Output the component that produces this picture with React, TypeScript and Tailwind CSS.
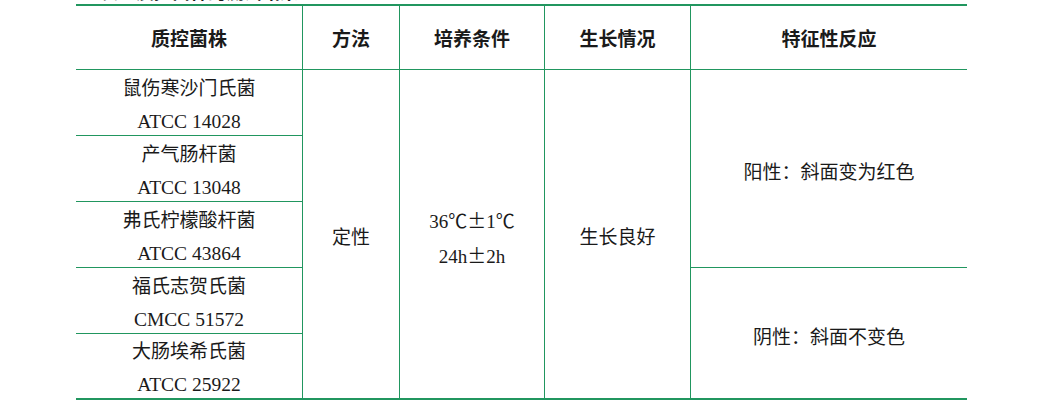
import React from "react";

const strains = [
  { name: "鼠伤寒沙门氏菌", code: "ATCC 14028", cls: "row-start-2 border-b" },
  { name: "产气肠杆菌", code: "ATCC 13048", cls: "row-start-3 border-b" },
  { name: "弗氏柠檬酸杆菌", code: "ATCC 43864", cls: "row-start-4 border-b" },
  { name: "福氏志贺氏菌", code: "CMCC 51572", cls: "row-start-5 border-b" },
  { name: "大肠埃希氏菌", code: "ATCC 25922", cls: "row-start-6" },
];

const headers = [
  { t: "质控菌株", cls: "col-start-1 border-r" },
  { t: "方法", cls: "col-start-2 border-r" },
  { t: "培养条件", cls: "col-start-3 border-r" },
  { t: "生长情况", cls: "col-start-4 border-r" },
  { t: "特征性反应", cls: "col-start-5" },
];

const Pm = () => <span className="font-['Noto_Sans_CJK_SC',sans-serif]">±</span>;

export default function App() {
  return (
    <div className="w-[1038px] h-[407px] bg-white overflow-hidden text-[#1a1a1a] font-['Liberation_Serif','Noto_Sans_CJK_SC',serif]">
      <div className="h-[4px] overflow-hidden pl-[100px]">
        <div className="-mt-[17px] text-[18px] leading-[20px] font-bold whitespace-nowrap">表 2 质控菌株的测试结果</div>
      </div>
      <div className="ml-[76px] w-[891px] border-t-2 border-b-2 border-[#21965f]">
        <div className="grid grid-cols-[227px_97px_145px_146px_276px] grid-rows-[64px_66px_66px_66px_66px_64px] text-[19px]">
          {headers.map((h) => (
            <div
              key={h.t}
              className={`row-start-1 flex items-center justify-center pt-[6px] font-bold border-b border-[#21965f] ${h.cls}`}
            >
              {h.t}
            </div>
          ))}
          {strains.map((s) => (
            <div
              key={s.code}
              className={`col-start-1 flex flex-col items-center justify-center pt-[4px] leading-[33px] border-r border-[#21965f] ${s.cls}`}
            >
              <div>{s.name}</div>
              <div className="text-[19.5px]">{s.code}</div>
            </div>
          ))}
          <div className="col-start-2 row-start-2 row-span-5 flex items-center justify-center border-r border-[#21965f] pt-[8px]">
            定性
          </div>
          <div className="col-start-3 row-start-2 row-span-5 flex flex-col items-center justify-center leading-[33px] border-r border-[#21965f] pt-[8px]">
            <div>
              36℃<Pm />1℃
            </div>
            <div>
              24h<Pm />2h
            </div>
          </div>
          <div className="col-start-4 row-start-2 row-span-5 flex items-center justify-center border-r border-[#21965f] pt-[8px]">
            生长良好
          </div>
          <div className="col-start-5 row-start-2 row-span-3 flex items-center justify-center border-b border-[#21965f] pt-[10px]">
            阳性：斜面变为红色
          </div>
          <div className="col-start-5 row-start-5 row-span-2 flex items-center justify-center pt-[10px]">
            阴性：斜面不变色
          </div>
        </div>
      </div>
    </div>
  );
}
